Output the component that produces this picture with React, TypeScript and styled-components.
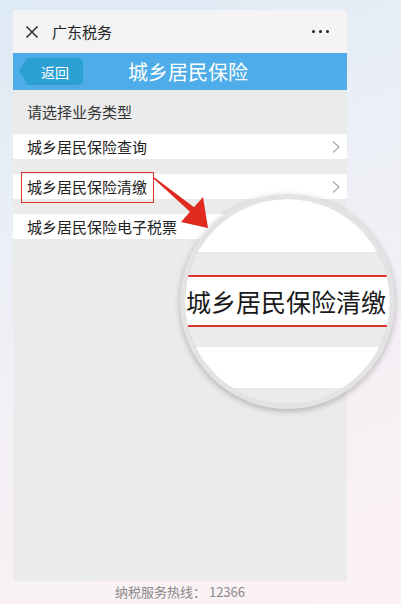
import React from 'react';
import styled, { createGlobalStyle } from 'styled-components';

const GlobalStyle = createGlobalStyle`
	html, body {
		margin: 0;
		padding: 0;
	}
	body {
		font-family: 'Noto Sans CJK SC', 'Noto Sans', sans-serif;
		color: #222;
	}
`;

const Page = styled.div`
	position: relative;
	width: 401px;
	height: 604px;
	box-sizing: border-box;
	padding: 10px 0 0 13px;
	display: flex;
	flex-direction: column;
	overflow: hidden;
	background: linear-gradient(160deg, #dde9f4 0%, #eaeff6 30%, #f5f0f5 65%, #fcf2f5 100%);
`;

const Panel = styled.div`
	width: 334px;
	height: 571px;
	background: #ebebeb;
	display: flex;
	flex-direction: column;
`;

const TopBar = styled.div`
	height: 43px;
	background: #f3f3f3;
	display: flex;
	align-items: center;
	padding: 0 18px 0 12px;
`;

const AppName = styled.span`
	margin-left: 13px;
	font-size: 15px;
	color: #222;
	flex: 1;
`;

const Dots = styled.div`
	display: flex;
	gap: 4px;
	span {
		width: 3px;
		height: 3px;
		border-radius: 50%;
		background: #222;
	}
`;

const NavBar = styled.div`
	height: 37px;
	background: #4eade8;
	display: flex;
	align-items: center;
	padding-left: 6px;
`;

const BackButton = styled.div`
	position: relative;
	height: 27px;
	width: 56px;
	background: #2c9fd3;
	border-radius: 0 5px 5px 0;
	color: #fff;
	font-size: 14px;
	display: flex;
	align-items: center;
	justify-content: center;
	margin-left: 8px;
	&::before {
		content: '';
		position: absolute;
		left: -8px;
		top: 0;
		border-style: solid;
		border-width: 13.5px 8px 13.5px 0;
		border-color: transparent #2c9fd3 transparent transparent;
	}
`;

const Title = styled.div`
	margin-left: 45px;
	color: #fff;
	font-size: 20px;
`;

const SectionLabel = styled.div`
	height: 43px;
	padding-left: 14px;
	display: flex;
	align-items: center;
	font-size: 15px;
	color: #333;
`;

const List = styled.div`
	display: flex;
	flex-direction: column;
	gap: 15px;
	margin-top: 1px;
`;

const Row = styled.div`
	height: 25px;
	background: #fff;
	display: flex;
	align-items: center;
	justify-content: space-between;
	padding: 0 6px 0 14px;
	font-size: 15px;
	color: #222;
`;

const Footer = styled.div`
	width: 334px;
	padding-top: 1px;
	text-align: center;
	font-size: 13px;
	color: #8a8a8a;
`;

const Highlight = styled.div`
	position: absolute;
	left: 21px;
	top: 172px;
	width: 131px;
	height: 29px;
	border: 1.5px solid #d8322a;
`;

const Pointer = styled.svg`
	position: absolute;
	left: 0;
	top: 0;
	width: 401px;
	height: 604px;
	pointer-events: none;
`;

const Magnifier = styled.div`
	position: absolute;
	left: 180px;
	top: 194px;
	width: 205px;
	height: 205px;
	border-radius: 50%;
	border: 5px solid #e3e3e3;
	box-shadow: inset 0 0 0 1.5px #9c9c9c, 0 2px 6px rgba(0, 0, 0, 0.25);
	overflow: hidden;
	display: flex;
	flex-direction: column;
	background: #ebebeb;
`;

const Band = styled.div<{ $h: number; $white?: boolean }>`
	flex: none;
	height: ${(p) => p.$h}px;
	background: ${(p) => (p.$white ? '#fff' : '#ebebeb')};
`;

const ZoomRow = styled.div`
	flex: none;
	height: 48px;
	background: #fff;
	border-top: 2px solid #d8322a;
	border-bottom: 2px solid #d8322a;
	display: flex;
	align-items: center;
	padding-left: 1px;
	font-size: 25px;
	color: #1a1a1a;
	white-space: nowrap;
`;

const Chevron = () => (
	<svg width="10" height="14" viewBox="0 0 10 14">
		<polyline points="2,1.5 8,7 2,12.5" fill="none" stroke="#a8a8a8" strokeWidth="1.2" />
	</svg>
);

const CloseIcon = () => (
	<svg width="14" height="14" viewBox="0 0 14 14">
		<path d="M1.5 1.5 L12.5 12.5 M12.5 1.5 L1.5 12.5" stroke="#333" strokeWidth="1.6" fill="none" />
	</svg>
);

export default function App() {
	return (
		<>
			<GlobalStyle />
			<Page>
				<Panel>
					<TopBar>
						<CloseIcon />
						<AppName>广东税务</AppName>
						<Dots>
							<span />
							<span />
							<span />
						</Dots>
					</TopBar>
					<NavBar>
						<BackButton>返回</BackButton>
						<Title>城乡居民保险</Title>
					</NavBar>
					<SectionLabel>请选择业务类型</SectionLabel>
					<List>
						<Row>
							城乡居民保险查询
							<Chevron />
						</Row>
						<Row>
							城乡居民保险清缴
							<Chevron />
						</Row>
						<Row>
							城乡居民保险电子税票
							<Chevron />
						</Row>
					</List>
				</Panel>
				<Footer>纳税服务热线： 12366</Footer>

				<Highlight />
				<Pointer viewBox="0 0 401 604">
					<polygon
						points="154.5,177.5 194,207.3 203,197 208,228 181,222 190,211.7 153.5,178.5"
						fill="#e02a20"
					/>
				</Pointer>
				<Magnifier>
					<Band $h={53} $white />
					<Band $h={23} />
					<ZoomRow>城乡居民保险清缴</ZoomRow>
					<Band $h={20} />
					<Band $h={41} $white />
					<Band $h={40} />
				</Magnifier>
			</Page>
		</>
	);
}
